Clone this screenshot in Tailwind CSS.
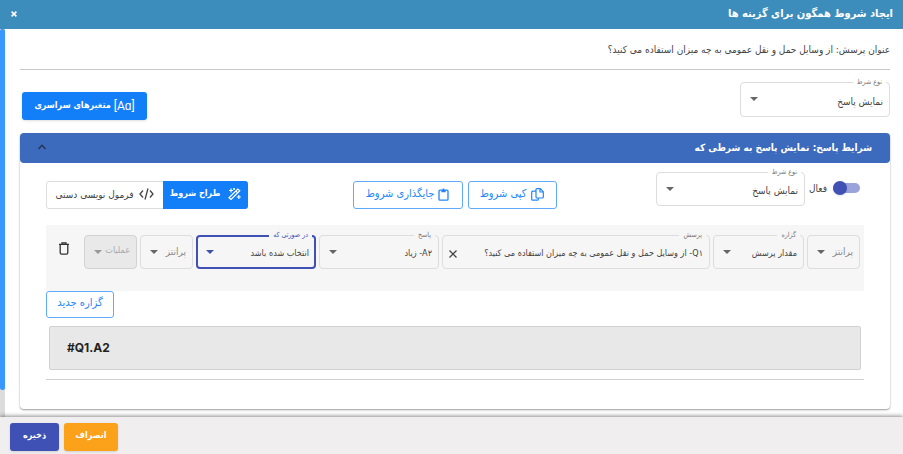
<!DOCTYPE html>
<html lang="fa" dir="rtl">
<head>
  <meta charset="UTF-8" />
  <meta name="viewport" content="width=device-width, initial-scale=1.0" />
  <title>ایجاد شروط همگون برای گزینه ها</title>
  <script src="https://cdn.jsdelivr.net/npm/@tailwindcss/browser@4"></script>
</head>
<body class="h-screen flex flex-col overflow-hidden bg-white text-[#444] text-[10px] font-['DejaVu_Sans_Condensed','DejaVu_Sans',sans-serif]">

  <!-- Header -->
  <header class="h-[29px] shrink-0 flex items-center justify-between px-[10px] pb-[2px] bg-[#3c8dbc] text-white">
    <h1 class="text-[11px] leading-4 font-bold">ایجاد شروط همگون برای گزینه ها</h1>
    <button type="button" aria-label="بستن" class="w-2 h-4 flex items-center justify-center">
      <svg class="w-[6px] h-[6px]" viewBox="0 0 6 6" fill="none" stroke="currentColor" stroke-width="1.6"><path d="M.6.6l4.8 4.8M5.4.6L.6 5.4" /></svg>
    </button>
  </header>

  <div class="flex-1 min-h-0 flex">
    <main class="flex-1 min-w-0 overflow-hidden pr-[13px] pl-[15px]">
      <p class="h-[41px] flex items-center border-b border-[#c8c8c8]">عنوان پرسش: از وسایل حمل و نقل عمومی به چه میزان استفاده می کنید؟</p>

      <div class="flex items-start justify-between pt-3 pl-[2px]">
        <div class="relative w-[150px]">
          <label for="type" class="absolute -top-[6px] right-1 px-1 bg-white text-[7px] leading-3 text-[#777]">نوع شرط</label>
          <select id="type" class="block w-full h-[35px] pr-[6px] pt-1 appearance-none bg-transparent rounded border border-[#ddd]">
            <option>نمایش پاسخ</option>
          </select>
          <svg class="absolute left-[10px] top-[15px] w-2 h-1 pointer-events-none" viewBox="0 0 8 4" fill="#666"><path d="M0 0h8L4 4z" /></svg>
        </div>
        <button type="button" class="mt-[10px] w-[125px] h-7 flex items-center justify-center gap-[3px] rounded-[3px] bg-[#127ef8] text-white text-[9px] font-bold whitespace-nowrap shadow">
          <span dir="ltr" class="font-['Roboto',sans-serif] text-[12px] font-normal">[Aɑ]</span>
          متغیرهای سراسری
        </button>
      </div>

      <!-- Conditions panel -->
      <section class="mt-[13px] rounded bg-white shadow-[0_1px_2px_rgba(0,0,0,0.4)]">
        <h2>
          <button type="button" aria-expanded="true" class="w-full h-[30px] px-[18px] pb-[2px] flex items-center justify-between rounded bg-[#3c6abd] text-white text-[10px] font-bold">
            <span>شرایط پاسخ: نمایش پاسخ به شرطی که</span>
            <svg class="w-2 h-[6px] text-[#263550]" viewBox="0 0 8 6" fill="none" stroke="currentColor" stroke-width="1.4"><path d="M.5 5L4 1.3 7.5 5" /></svg>
          </button>
        </h2>

        <div class="px-[26px] pt-[9px] pb-[29px]">
          <div class="flex items-start justify-between">
            <div class="flex">
              <label class="h-8 flex items-center gap-[6px] pr-1 ml-1">
                <input type="checkbox" checked class="peer sr-only" />
                <span class="relative w-[27px] h-[10px] rounded-full bg-[#9ba3da]">
                  <span class="absolute left-0 -top-[2px] size-[14px] rounded-full bg-[#3f51b5] shadow"></span>
                </span>
                فعال
              </label>
              <div class="relative w-[149px]">
                <label for="subtype" class="absolute -top-[6px] right-1 px-1 bg-white text-[7px] leading-3 text-[#777]">نوع شرط</label>
                <select id="subtype" class="block w-full h-[34px] pr-[6px] pt-[2px] appearance-none bg-transparent rounded border border-[#ddd]">
                  <option>نمایش پاسخ</option>
                </select>
                <svg class="absolute left-[10px] top-[15px] w-2 h-1 pointer-events-none" viewBox="0 0 8 4" fill="#666"><path d="M0 0h8L4 4z" /></svg>
              </div>
            </div>

            <div class="flex gap-[5px] pt-[9px] ml-[5px]">
              <button type="button" class="w-[89px] h-7 pb-[2px] flex items-center justify-center gap-[5px] rounded-[3px] border border-[#5faaf9] text-[#2386f8] text-[11px]">
                <svg class="w-[13px] h-[13px]" viewBox="0 0 13 13" fill="none" stroke="currentColor" stroke-width="1.2"><path d="M5 3.5V1.6q0-1 1-1h3.2L12.3 3.7V9q0 1-1 1H6q-1 0-1-1zM9 .8V4h3.2M5 3.2H1.7q-1 0-1 1v7q0 1 1 1h4.6q1 0 1-1V10" /></svg>
                کپی شروط
              </button>
              <button type="button" class="w-[110px] h-7 pb-[2px] flex items-center justify-center gap-1 rounded-[3px] border border-[#5faaf9] text-[#2386f8] text-[11px]">
                <svg class="w-[11px] h-[13px]" viewBox="0 0 11 13" fill="none" stroke="currentColor" stroke-width="1.3"><path d="M3.5 2.2H2q-1 0-1 1v8q0 1 1 1h7q1 0 1-1v-8q0-1-1-1H7.5" /><path d="M3.3 1.6h1.2a1 1 0 0 1 2 0h1.2v2.6H3.3z" fill="currentColor" stroke="none" /></svg>
                جایگذاری شروط
              </button>
            </div>

            <div class="mt-[9px] w-[202px] h-7 flex rounded-[3px] border border-[#ddd]">
              <button type="button" aria-pressed="true" class="w-[85px] -my-px -mr-px pb-[2px] flex items-center justify-center gap-2 rounded-r-[3px] bg-[#127ef8] text-white text-[9px] font-bold whitespace-nowrap">
                <svg class="w-[13px] h-3" viewBox="0 0 13 12" fill="none" stroke="currentColor" stroke-width="1.2"><path d="M1 9.7L9.8 1l2 1.8L3 11.5zM7.8 3l2 1.9M3 .5v4M1 2.5h4M6 0v2M5 1h2M10.8 7v4M8.8 9h4" /></svg>
                طراح شروط
              </button>
              <button type="button" class="flex-1 pb-[2px] flex items-center justify-center gap-[6px] whitespace-nowrap">
                <svg class="w-[15px] h-3" viewBox="0 0 15 12" fill="none" stroke="currentColor" stroke-width="1.3"><path d="M4 2.5L1 6l3 3.5M11 2.5L14 6l-3 3.5M9 .5L6 11.5" /></svg>
                فرمول نویسی دستی
              </button>
            </div>
          </div>

          <!-- Statement row -->
          <div class="mt-4 h-[66px] flex items-start gap-[3px] pt-[10px] pr-1 bg-[#f6f6f6]">
            <div class="relative w-[53px] shrink-0">
              <select aria-label="پرانتز" class="block w-full h-[34px] pr-[6px] pb-[2px] appearance-none rounded border border-[#ddd] text-[#888]">
                <option>پرانتز</option>
              </select>
              <svg class="absolute left-[10px] top-[15px] w-2 h-1 pointer-events-none" viewBox="0 0 8 4" fill="#666"><path d="M0 0h8L4 4z" /></svg>
            </div>
            <div class="relative w-[91px] shrink-0">
              <label for="statement" class="absolute -top-[6px] right-1 px-1 bg-[#f6f6f6] text-[7px] leading-3 text-[#777]">گزاره</label>
              <select id="statement" class="block w-full h-[34px] pr-[6px] pt-1 appearance-none rounded border border-[#ddd] text-[9px]">
                <option>مقدار پرسش</option>
              </select>
              <svg class="absolute left-[10px] top-[15px] w-2 h-1 pointer-events-none" viewBox="0 0 8 4" fill="#666"><path d="M0 0h8L4 4z" /></svg>
            </div>
            <div class="relative flex-1 min-w-0">
              <label for="question" class="absolute -top-[6px] right-1 px-1 bg-[#f6f6f6] text-[7px] leading-3 text-[#777]">پرسش</label>
              <input id="question" type="text" value="Q۱- از وسایل حمل و نقل عمومی به چه میزان استفاده می کنید؟" class="block w-full h-[34px] pr-[6px] pl-5 pt-[2px] rounded border border-[#ddd] text-[9px]" />
              <button type="button" aria-label="پاک کردن" class="absolute left-[7px] top-[15px]">
                <svg class="size-2" viewBox="0 0 8 8" fill="none" stroke="#444" stroke-width="1.3"><path d="M.5.5l7 7M7.5.5l-7 7" /></svg>
              </button>
            </div>
            <div class="relative w-[120px] shrink-0">
              <label for="answer" class="absolute -top-[6px] right-1 px-1 bg-[#f6f6f6] text-[7px] leading-3 text-[#777]">پاسخ</label>
              <select id="answer" class="block w-full h-[34px] pr-[6px] pt-1 appearance-none rounded border border-[#ddd] text-[9px]">
                <option>A۲- زیاد</option>
              </select>
              <svg class="absolute left-[10px] top-[15px] w-2 h-1 pointer-events-none" viewBox="0 0 8 4" fill="#666"><path d="M0 0h8L4 4z" /></svg>
            </div>
            <div class="relative w-[120px] shrink-0">
              <label for="condition" class="absolute -top-[6px] right-1 px-1 bg-[#f6f6f6] text-[7px] leading-3 text-[#3f51b5]">در صورتی که</label>
              <select id="condition" class="block w-full h-[34px] pr-[5px] pt-1 appearance-none rounded border-2 border-[#3f51b5] text-[9px]">
                <option>انتخاب شده باشد</option>
              </select>
              <svg class="absolute left-[10px] top-[15px] w-2 h-1 pointer-events-none" viewBox="0 0 8 4" fill="#3f51b5"><path d="M0 0h8L4 4z" /></svg>
            </div>
            <div class="relative w-[53px] shrink-0">
              <select aria-label="پرانتز" class="block w-full h-[34px] pr-[6px] pb-[2px] appearance-none rounded border border-[#ddd] text-[#888]">
                <option>پرانتز</option>
              </select>
              <svg class="absolute left-[10px] top-[15px] w-2 h-1 pointer-events-none" viewBox="0 0 8 4" fill="#666"><path d="M0 0h8L4 4z" /></svg>
            </div>
            <div class="relative w-[53px] shrink-0">
              <select aria-label="عملیات" disabled class="block w-full h-[34px] pr-[6px] pb-[2px] appearance-none rounded border border-[#d2d2d2] bg-[#e9e9e9] text-[#aaa] text-[9px] opacity-100">
                <option>عملیات</option>
              </select>
              <svg class="absolute left-[10px] top-[15px] w-2 h-1 pointer-events-none" viewBox="0 0 8 4" fill="#999"><path d="M0 0h8L4 4z" /></svg>
            </div>
            <button type="button" aria-label="حذف" class="w-[35px] shrink-0 h-[26px] flex items-center justify-center">
              <svg class="w-[10px] h-[13px]" viewBox="0 0 10 13" fill="none" stroke="#333" stroke-width="1.3"><path d="M0 2.4h10M3 2.2V.8h4v1.4M1.2 2.6v8.2q0 1.4 1.4 1.4h4.8q1.4 0 1.4-1.4V2.6" /></svg>
            </button>
          </div>

          <div class="flex justify-end">
            <button type="button" class="w-[68px] h-[27px] pb-[2px] rounded-[3px] border border-[#5faaf9] bg-white text-[#2386f8] text-[11px]">گزاره جدید</button>
          </div>

          <output dir="ltr" class="block mt-2 mx-[3px] h-[44px] px-[17px] leading-[42px] rounded-[2px] border border-[#d2d2d2] bg-[#e8e8e8] text-[#222] font-['Inter',sans-serif] font-bold text-[12px]">#Q1.A2</output>
          <hr class="mt-[9px] border-[#d0d0d0]" />
        </div>
      </section>
    </main>

    <!-- Scroll track -->
    <div class="w-[5px] shrink-0 bg-[#dcdcdc]">
      <div class="h-[93%] rounded-[2px] bg-[#3898ff]"></div>
    </div>
  </div>

  <!-- Footer -->
  <footer class="relative h-[37px] shrink-0 flex items-center justify-end gap-[5px] pl-[10px] pt-[3px] bg-[#f0eeef] shadow-[0_-1px_4px_rgba(0,0,0,0.45)] text-white text-[9px] font-bold">
    <button type="button" class="w-[54px] h-7 pb-[2px] rounded-[3px] bg-[#fca11a] shadow">انصراف</button>
    <button type="button" class="w-[49px] h-7 pb-[2px] rounded-[3px] bg-[#3f51b5] shadow">ذخیره</button>
  </footer>
</body>
</html>
